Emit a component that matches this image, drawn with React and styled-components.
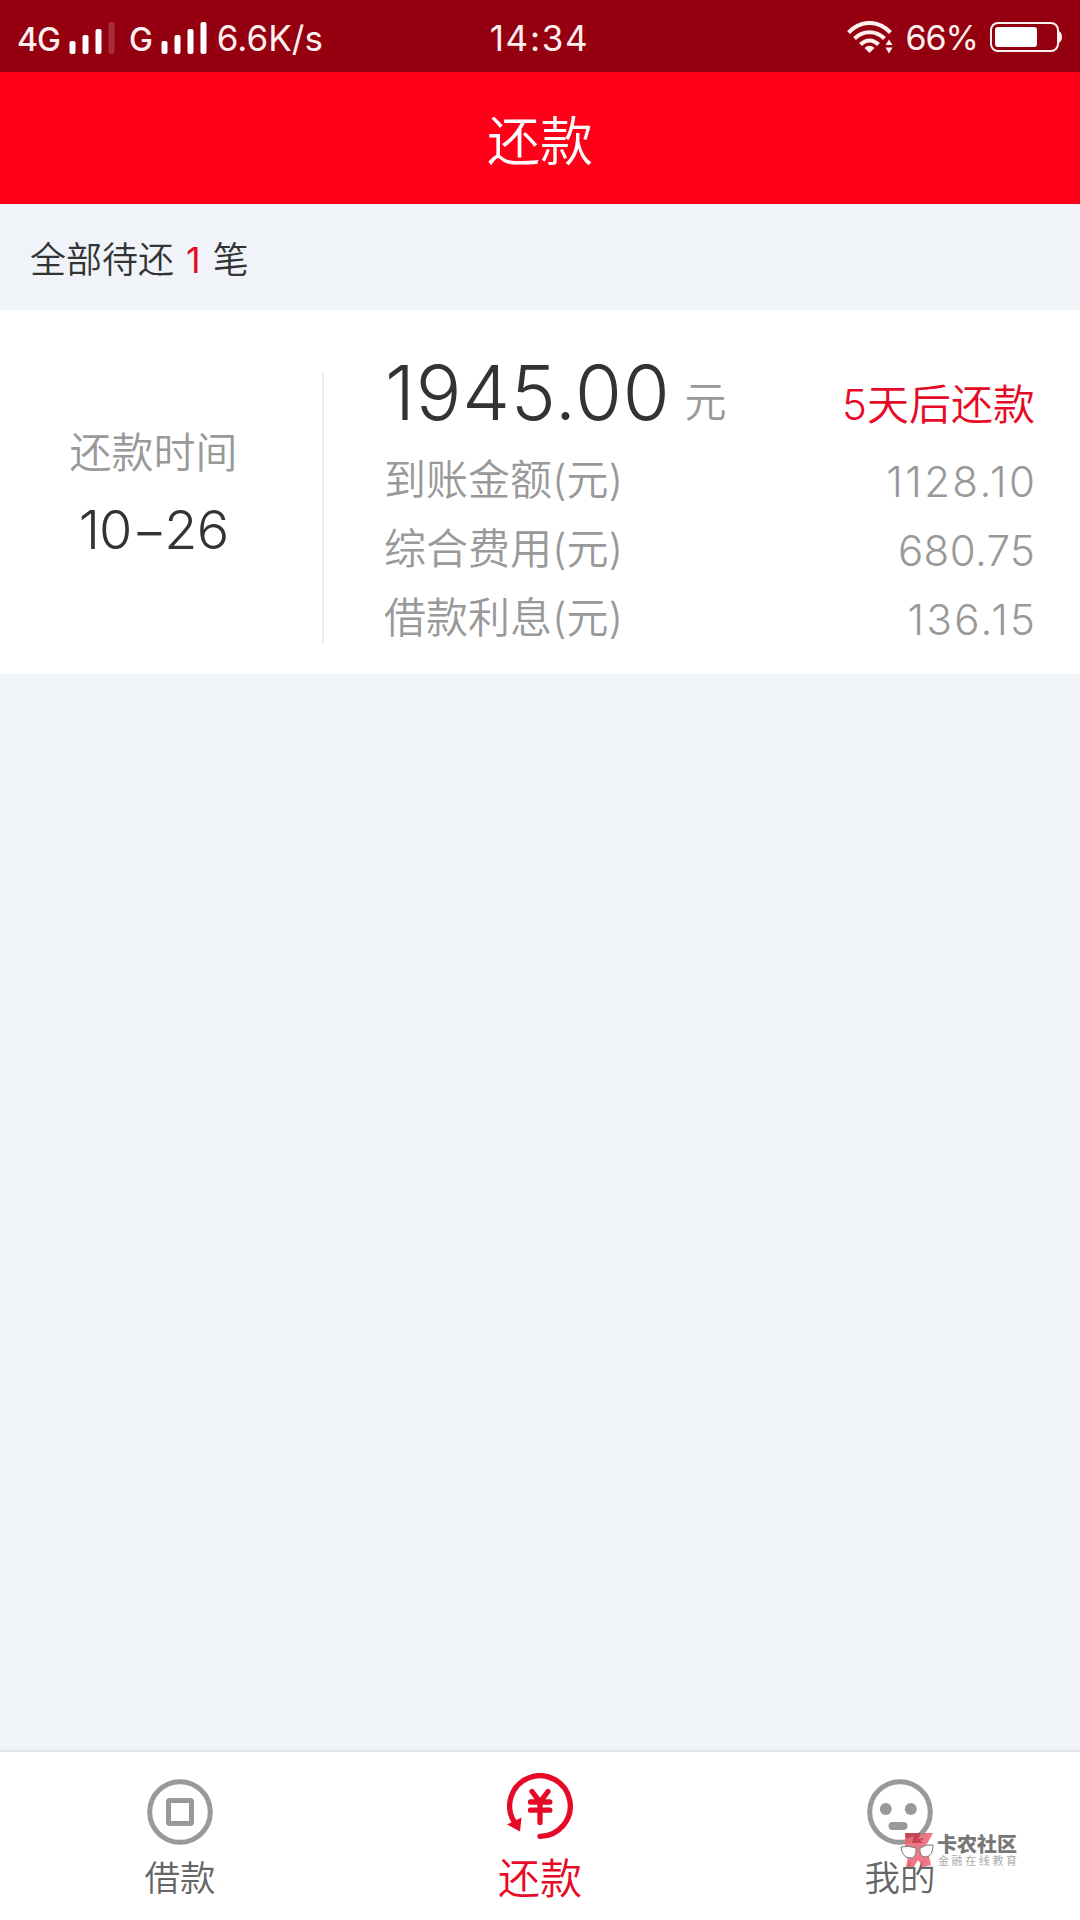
import styled, { createGlobalStyle, css } from 'styled-components';

const GlobalStyle = createGlobalStyle`
  * {
    box-sizing: border-box;
  }

  body {
    margin: 0;
    background: #f0f3f7;
    font-family: Inter, 'Noto Sans CJK SC', sans-serif;
    font-weight: 350;
    color: #333;
  }

  svg {
    display: block;
  }
`;

const Screen = styled.div`
  width: 1080px;
  height: 1920px;
  display: flex;
  flex-direction: column;
  overflow: hidden;
`;

const StatusBar = styled.div`
  height: 72px;
  padding: 3px 18px 0 17px;
  display: grid;
  grid-template-columns: 1fr auto 1fr;
  align-items: center;
  background: #940010;
  color: #fff0f0;
  font-size: 35px;
  font-weight: 400;
  line-height: 40px;
`;

const StatusGroup = styled.div`
  display: flex;
  align-items: center;
  justify-content: ${({ $end }) => ($end ? 'flex-end' : 'flex-start')};
`;

const Network = styled.span`
  font-size: 32px;
  font-weight: 500;
  letter-spacing: -1px;
  padding-top: 4px;
`;

const Speed = styled.span`
  margin-left: 10px;
`;

const Clock = styled.span`
  letter-spacing: 1.7px;
`;

const Bars = styled.svg`
  margin: 0 ${({ $gap }) => $gap || 0}px 0 9px;
`;

const Percent = styled.span`
  margin: 0 12px;
  font-size: 34px;
  letter-spacing: -1px;
`;

const Header = styled.header`
  height: 132px;
  padding-top: 7px;
  display: flex;
  align-items: center;
  justify-content: center;
  background: #ff0019;
  color: #fff;
  font-size: 53px;
  line-height: 60px;
`;

const Summary = styled.div`
  height: 106px;
  padding: 5px 30px 0;
  display: flex;
  align-items: center;
  gap: 12px;
  font-size: 36px;
  line-height: 40px;
`;

const Count = styled.span`
  color: #e60a26;
  font-weight: 400;
`;

const Card = styled.section`
  height: 364px;
  display: flex;
  background: #fff;
`;

const DueDate = styled.div`
  width: 324px;
  height: 271px;
  margin-top: 62px;
  padding: 56px 15px 0 0;
  border-right: 2px solid #eee;
  text-align: center;
`;

const DueLabel = styled.div`
  color: #999;
  font-size: 42px;
  line-height: 50px;
`;

const DueValue = styled.div`
  margin-top: 22px;
  font-size: 54px;
  line-height: 60px;
  letter-spacing: -0.8px;
`;

const Details = styled.div`
  flex: 1;
  padding: 42px 45px 0 60px;
`;

const AmountRow = styled.div`
  height: 94px;
  display: flex;
  align-items: baseline;
`;

const Amount = styled.span`
  margin-left: 1px;
  font-size: 76px;
  line-height: 80px;
  letter-spacing: 0.8px;
`;

const Unit = styled.span`
  margin-left: 14px;
  color: #999;
  font-size: 42px;
  line-height: 50px;
  vertical-align: 3px;
`;

const DueIn = styled.span`
  margin-left: auto;
  color: #e60a26;
  font-size: 42px;
`;

const DetailRow = styled.div`
  height: 69px;
  display: flex;
  align-items: center;
  justify-content: space-between;
  color: #999;
  font-size: 42px;
  line-height: 50px;
`;

const DetailLabel = styled.span`
  padding-bottom: 2px;
`;

const DetailValue = styled.span`
  padding-top: 2px;
  margin-right: -${({ $tracking }) => $tracking}px;
  letter-spacing: ${({ $tracking }) => $tracking}px;
`;

const TabBar = styled.nav`
  height: 168px;
  margin-top: auto;
  display: grid;
  grid-template-columns: repeat(3, 1fr);
  background: #fff;
  box-shadow: 0 -1px 3px rgba(120, 110, 140, 0.22);
`;

const Tab = styled.div`
  position: relative;
  display: flex;
  flex-direction: column;
  align-items: center;
  padding-top: 27px;
  color: #666;
  font-size: 35.5px;
  line-height: 44px;

  > svg {
    margin-bottom: ${({ $active }) => ($active ? 18 : 12)}px;
  }

  ${({ $active }) =>
    $active &&
    css`
      padding-top: 21px;
      color: #e60a26;
      font-size: 42px;
    `}
`;

// Sits over the last tab
const Watermark = styled.div`
  position: absolute;
  left: 180px;
  top: 80px;
  display: flex;
  gap: 3px;
`;

const WatermarkText = styled.div`
  padding-top: 3px;
  white-space: nowrap;
`;

const WatermarkName = styled.div`
  color: #777;
  font-size: 20px;
  font-weight: 900;
  line-height: 20px;
`;

const WatermarkSlogan = styled.div`
  margin-left: 1px;
  color: #aaa;
  font-size: 11px;
  font-weight: 400;
  line-height: 12px;
  letter-spacing: 2.6px;
`;

const details = [
  { label: '到账金额(元)', value: '1128.10', tracking: 2.4 },
  { label: '综合费用(元)', value: '680.75', tracking: 0.4 },
  { label: '借款利息(元)', value: '136.15', tracking: 2.4 },
];

const SignalBars = ({ weak, gap }) => (
  <Bars $gap={gap} width="46" height="34" fill="#fff">
    <rect x="0.5" y="20" width="6" height="13" rx="2" />
    <rect x="13.5" y="14" width="6" height="19" rx="2" />
    <rect x="26.5" y="8" width="6" height="25" rx="2" />
    <rect x="39.5" y="1" width="6" height="32" rx="2" opacity={weak ? 0.18 : 1} />
  </Bars>
);

const WifiIcon = () => (
  <svg width="46" height="34" viewBox="0 0 46 34" fill="none" stroke="#fff0f0" strokeWidth="4">
    <path d="M1.5 11.5C14 -1.3 31 -1.3 43.5 11.5" />
    <path d="M7.5 17.5C16 9 29 9 37.5 17.5" />
    <path d="M13.5 23.5C19 18 26 18 31.5 23.5" />
    <path d="M17.5 27Q22.5 22.500 27.5 27L22.5 32Z" fill="#fff0f0" stroke="none" />
    <path d="M38.5 24L42 18.5L45.5 24ZM38.5 26.5L42 32.5L45.5 26.5Z" fill="#fff0f0" stroke="none" />
  </svg>
);

const BatteryIcon = () => (
  <svg width="72" height="34" viewBox="0 0 72 34" fill="none">
    <rect x="1" y="2" width="67" height="28" rx="7" stroke="#fff0f0" strokeWidth="2" />
    <rect x="5" y="6" width="42" height="20" rx="3" fill="#fff" />
    <path d="M69 10Q72 12 72 16T69 22Z" fill="#fff0f0" />
  </svg>
);

const CoinIcon = () => (
  <svg width="66" height="66" viewBox="0 0 66 66" fill="none" stroke="#999" strokeWidth="5">
    <circle cx="33" cy="33" r="30.3" />
    <rect x="21.5" y="21.5" width="23" height="23" rx="1.5" />
  </svg>
);

const RepayIcon = () => (
  <svg width="66" height="66" viewBox="0 0 66 66" fill="none" stroke="#e60a26" strokeWidth="5.3" strokeLinecap="round">
    <path d="M33 63.3A30.3 30.3 0 1 0 7.5 49.4" />
    <path d="M0 51.5L14.5 44.5L13 58.5Z" fill="#e60a26" stroke="none" />
    <path d="M25 18.5L33 29L41 18.5M33 29V49.5M23.5 29H42.8M23.5 37.2H42.8" />
  </svg>
);

const FaceIcon = () => (
  <svg width="66" height="66" viewBox="0 0 66 66" fill="#999">
    <circle cx="33" cy="33" r="30.3" fill="none" stroke="#999" strokeWidth="5" />
    <circle cx="18.8" cy="30" r="6" />
    <circle cx="43.8" cy="30" r="6" />
    <rect x="21.5" y="43" width="19" height="8" rx="4" />
  </svg>
);

const WatermarkLogo = () => (
  <svg width="34" height="36" viewBox="0 0 34 36">
    <path
      d="M5 1H21L20 6L24 1H33L27 12L19 18L29 24L31 33L23 35L18 28L14 35H6L8 24L5 14Z"
      fill="#ee6474"
      opacity="0.88"
    />
    <path d="M5 1H21L18 7L25 6L20 9L24 11H12L14 4L6 7Z" fill="#b93b4b" opacity="0.8" />
    <g fill="#fff" stroke="#777" strokeWidth="1">
      <path d="M1 15Q8 13 16 16Q17 27 9 26Q2 25 1 15Z" />
      <path d="M33 13Q26 12 20 16Q19 25 26 25Q33 24 33 13Z" />
    </g>
  </svg>
);

const App = () => {
  return (
    <Screen>
      <GlobalStyle />
      <StatusBar>
        <StatusGroup>
          <Network>4G</Network>
          <SignalBars weak gap={14} />
          <Network>G</Network>
          <SignalBars />
          <Speed>6.6K/s</Speed>
        </StatusGroup>
        <Clock>14:34</Clock>
        <StatusGroup $end>
          <WifiIcon />
          <Percent>66%</Percent>
          <BatteryIcon />
        </StatusGroup>
      </StatusBar>

      <Header>还款</Header>

      <Summary>
        <span>全部待还</span>
        <Count>1</Count>
        <span>笔</span>
      </Summary>

      <Card>
        <DueDate>
          <DueLabel>还款时间</DueLabel>
          <DueValue>10−26</DueValue>
        </DueDate>
        <Details>
          <AmountRow>
            <Amount>
              1945.00
              <Unit>元</Unit>
            </Amount>
            <DueIn>5天后还款</DueIn>
          </AmountRow>
          {details.map((item) => (
            <DetailRow key={item.label}>
              <DetailLabel>{item.label}</DetailLabel>
              <DetailValue $tracking={item.tracking}>{item.value}</DetailValue>
            </DetailRow>
          ))}
        </Details>
      </Card>

      <TabBar>
        <Tab>
          <CoinIcon />
          借款
        </Tab>
        <Tab $active>
          <RepayIcon />
          还款
        </Tab>
        <Tab>
          <FaceIcon />
          我的
          <Watermark>
            <WatermarkLogo />
            <WatermarkText>
              <WatermarkName>卡农社区</WatermarkName>
              <WatermarkSlogan>金融在线教育</WatermarkSlogan>
            </WatermarkText>
          </Watermark>
        </Tab>
      </TabBar>
    </Screen>
  );
};

export default App;
